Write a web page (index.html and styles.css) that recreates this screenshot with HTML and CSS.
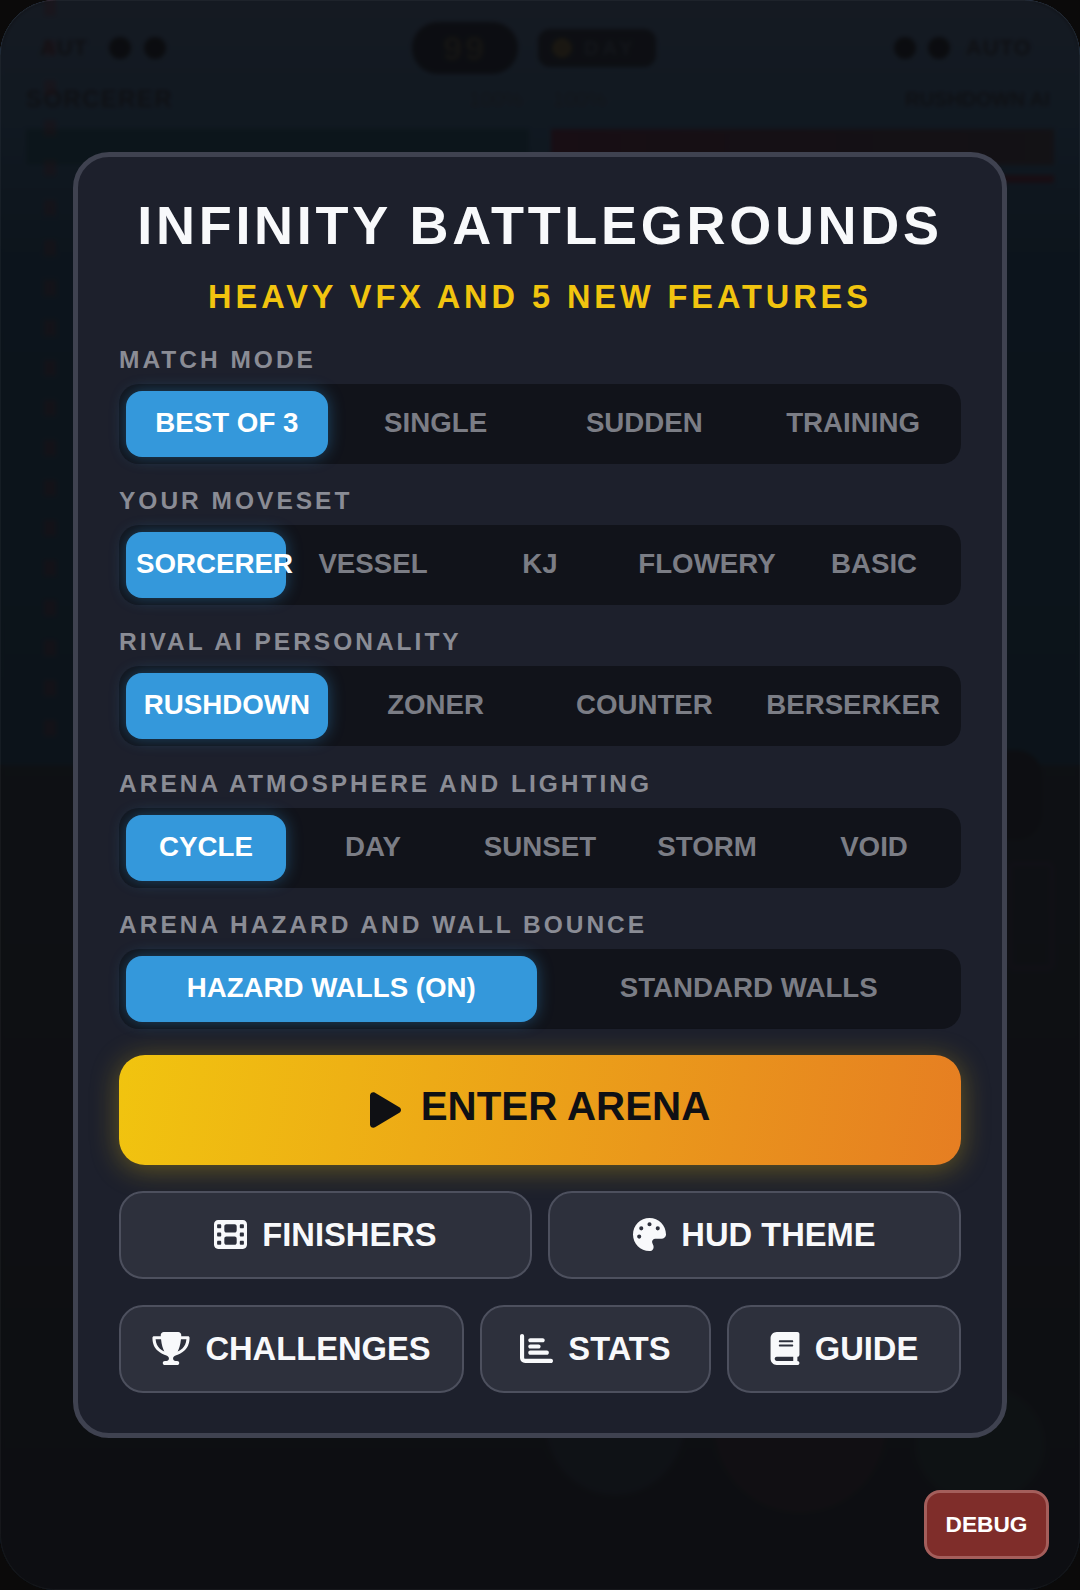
FILE: index.html
```html
<!DOCTYPE html>
<html lang="en">
<head>
    <meta charset="UTF-8">
    <meta name="viewport" content="width=device-width, initial-scale=1.0">
    <title>Infinity Battlegrounds</title>
    <link rel="stylesheet" href="styles.css">
</head>
<body>

<div class="screen">
  <!-- Game behind the menu -->
  <div class="arena">
    <div class="hud">
      <div class="hud__top">
        <div class="hud__side">
          <span class="hud__tag">AUT</span>
          <span class="hud__dot"></span>
          <span class="hud__dot"></span>
        </div>
        <div class="hud__center">
          <span class="hud__timer">99</span>
          <span class="hud__weather"><i class="hud__sun"></i>DAY</span>
        </div>
        <div class="hud__side hud__side--right">
          <span class="hud__dot"></span>
          <span class="hud__dot"></span>
          <span class="hud__tag">AUTO</span>
        </div>
      </div>
      <div class="hud__names">
        <span>SORCERER</span>
        <span class="hud__percents"><span>100%</span><span>100%</span></span>
        <span class="hud__rival">RUSHDOWN AI</span>
      </div>
      <div class="hud__bars">
        <div class="hud__bar hud__bar--you"></div>
        <div class="hud__bar hud__bar--rival"></div>
      </div>
    </div>
    <div class="rope"></div>
    <div class="ground"></div>
    <div class="ghost-blob"></div>
    <div class="ghost-frame"></div>
    <div class="pad pad--a"></div>
    <div class="pad pad--b"></div>
    <div class="pad pad--c"></div>
  </div>

  <!-- Start menu -->
  <div class="backdrop">
    <section class="menu">
      <h1 class="menu__title">INFINITY BATTLEGROUNDS</h1>
      <p class="menu__subtitle">HEAVY VFX AND 5 NEW FEATURES</p>

      <div class="field">
        <div class="field__label">MATCH MODE</div>
        <div class="tabs">
          <div class="tabs__item tabs__item--active">BEST OF 3</div>
          <div class="tabs__item">SINGLE</div>
          <div class="tabs__item">SUDDEN</div>
          <div class="tabs__item">TRAINING</div>
        </div>
      </div>

      <div class="field">
        <div class="field__label">YOUR MOVESET</div>
        <div class="tabs">
          <div class="tabs__item tabs__item--active">SORCERER</div>
          <div class="tabs__item">VESSEL</div>
          <div class="tabs__item">KJ</div>
          <div class="tabs__item">FLOWERY</div>
          <div class="tabs__item">BASIC</div>
        </div>
      </div>

      <div class="field">
        <div class="field__label">RIVAL AI PERSONALITY</div>
        <div class="tabs">
          <div class="tabs__item tabs__item--active">RUSHDOWN</div>
          <div class="tabs__item">ZONER</div>
          <div class="tabs__item">COUNTER</div>
          <div class="tabs__item">BERSERKER</div>
        </div>
      </div>

      <div class="field">
        <div class="field__label">ARENA ATMOSPHERE AND LIGHTING</div>
        <div class="tabs">
          <div class="tabs__item tabs__item--active">CYCLE</div>
          <div class="tabs__item">DAY</div>
          <div class="tabs__item">SUNSET</div>
          <div class="tabs__item">STORM</div>
          <div class="tabs__item">VOID</div>
        </div>
      </div>

      <div class="field">
        <div class="field__label">ARENA HAZARD AND WALL BOUNCE</div>
        <div class="tabs">
          <div class="tabs__item tabs__item--active">HAZARD WALLS (ON)</div>
          <div class="tabs__item">STANDARD WALLS</div>
        </div>
      </div>

      <button class="enter">
        <svg class="enter__icon" viewBox="0 0 448 512"><path d="M424.4 214.7L72.4 6.6C43.8-10.3 0 6.1 0 47.9V464c0 37.5 40.7 60.1 72.4 41.3l352-208c31.4-18.5 31.5-64.1 0-82.6z"/></svg>
        <span class="enter__text">ENTER ARENA</span>
      </button>

      <div class="actions actions--two">
        <button class="action">
          <svg class="action__icon" style="width:33px" viewBox="0 0 512 512"><path d="M0 96C0 60.7 28.7 32 64 32H448c35.3 0 64 28.7 64 64V416c0 35.3-28.7 64-64 64H64c-35.3 0-64-28.7-64-64V96zM48 368v32c0 8.8 7.2 16 16 16H96c8.8 0 16-7.2 16-16V368c0-8.8-7.2-16-16-16H64c-8.8 0-16 7.2-16 16zm368-16c-8.8 0-16 7.2-16 16v32c0 8.8 7.2 16 16 16h32c8.8 0 16-7.2 16-16V368c0-8.8-7.2-16-16-16H416zM48 240v32c0 8.8 7.2 16 16 16H96c8.8 0 16-7.2 16-16V240c0-8.8-7.2-16-16-16H64c-8.8 0-16 7.2-16 16zm368-16c-8.8 0-16 7.2-16 16v32c0 8.8 7.2 16 16 16h32c8.8 0 16-7.2 16-16V240c0-8.8-7.2-16-16-16H416zM48 112v32c0 8.8 7.2 16 16 16H96c8.8 0 16-7.2 16-16V112c0-8.8-7.2-16-16-16H64c-8.8 0-16 7.2-16 16zM416 96c-8.8 0-16 7.2-16 16v32c0 8.8 7.2 16 16 16h32c8.8 0 16-7.2 16-16V112c0-8.8-7.2-16-16-16H416zM160 128v64c0 17.7 14.3 32 32 32H320c17.7 0 32-14.3 32-32V128c0-17.7-14.3-32-32-32H192c-17.7 0-32 14.3-32 32zm32 160c-17.7 0-32 14.3-32 32v64c0 17.7 14.3 32 32 32H320c17.7 0 32-14.3 32-32V320c0-17.7-14.3-32-32-32H192z"/></svg>
          FINISHERS
        </button>
        <button class="action">
          <svg class="action__icon" style="width:33px" viewBox="0 0 512 512"><path d="M512 256c0 .9 0 1.8 0 2.7c-.4 36.5-33.6 61.3-70.1 61.3H344c-26.5 0-48 21.5-48 48c0 3.4 .4 6.7 1 9.9c2.1 10.2 6.5 20 10.8 29.9c6.1 13.8 12.1 27.5 12.1 42c0 31.8-21.6 60.7-53.4 62c-3.5 .1-7 .2-10.6 .2C114.6 512 0 397.4 0 256S114.6 0 256 0S512 114.6 512 256zM128 288a32 32 0 1 0 -64 0 32 32 0 1 0 64 0zm0-96a32 32 0 1 0 0-64 32 32 0 1 0 0 64zM288 96a32 32 0 1 0 -64 0 32 32 0 1 0 64 0zm96 96a32 32 0 1 0 0-64 32 32 0 1 0 0 64z"/></svg>
          HUD THEME
        </button>
      </div>

      <div class="actions actions--three">
        <button class="action">
          <svg class="action__icon" style="width:38px" viewBox="0 0 576 512"><path d="M400 0H176c-26.5 0-48.1 21.8-47.1 48.2c.2 5.3 .4 10.6 .7 15.8H24C10.7 64 0 74.7 0 88c0 92.6 33.5 157 78.5 200.7c44.3 43.1 98.3 64.8 138.1 75.8c23.4 6.5 39.4 26 39.4 45.6c0 20.9-17 37.9-37.9 37.9H192c-17.7 0-32 14.3-32 32s14.3 32 32 32H384c17.7 0 32-14.3 32-32s-14.3-32-32-32H357.9C337 448 320 431 320 410.1c0-19.6 15.9-39.2 39.4-45.6c39.9-11 93.9-32.7 138.2-75.8C542.5 245 576 180.6 576 88c0-13.3-10.7-24-24-24H446.4c.3-5.2 .5-10.4 .7-15.8C448.1 21.8 426.5 0 400 0zM48.9 112h84.4c9.1 90.1 29.2 150.3 51.9 190.6c-24.9-11-50.8-26.5-73.2-48.3c-32-31.1-58-76-63-142.3zM464.1 254.3c-22.4 21.8-48.3 37.3-73.2 48.3c22.7-40.3 42.8-100.5 51.9-190.6h84.4c-5.1 66.3-31.1 111.2-63 142.3z"/></svg>
          CHALLENGES
        </button>
        <button class="action">
          <svg class="action__icon" style="width:33px" viewBox="0 0 512 512"><path d="M32 32c17.7 0 32 14.3 32 32V400c0 8.8 7.2 16 16 16H480c17.7 0 32 14.3 32 32s-14.3 32-32 32H80c-44.2 0-80-35.8-80-80V64C0 46.3 14.3 32 32 32zm96 96c0-17.7 14.3-32 32-32l192 0c17.7 0 32 14.3 32 32s-14.3 32-32 32l-192 0c-17.7 0-32-14.3-32-32zm32 64H288c17.7 0 32 14.3 32 32s-14.3 32-32 32H160c-17.7 0-32-14.3-32-32s14.3-32 32-32zm0 96H416c17.7 0 32 14.3 32 32s-14.3 32-32 32H160c-17.7 0-32-14.3-32-32s14.3-32 32-32z"/></svg>
          STATS
        </button>
        <button class="action">
          <svg class="action__icon" style="width:30px" viewBox="0 0 448 512"><path d="M96 0C43 0 0 43 0 96V416c0 53 43 96 96 96H384h32c17.7 0 32-14.3 32-32s-14.3-32-32-32V384c17.7 0 32-14.3 32-32V32c0-17.7-14.3-32-32-32H384 96zm0 384H352v64H96c-17.7 0-32-14.3-32-32s14.3-32 32-32zm32-240c0-8.8 7.2-16 16-16H336c8.8 0 16 7.2 16 16s-7.2 16-16 16H144c-8.8 0-16-7.2-16-16zm16 48H336c8.8 0 16 7.2 16 16s-7.2 16-16 16H144c-8.8 0-16-7.2-16-16s7.2-16 16-16z"/></svg>
          GUIDE
        </button>
      </div>
    </section>
  </div>

  <button class="debug">DEBUG</button>
</div>

</body>
</html>
```

FILE: styles.css
```css
/* General styles */
* {
    box-sizing: border-box;
}
body {
    font-family: 'Liberation Sans', Arial, sans-serif;
    background: #0b0a0a;
    margin: 0;
}
button {
    font-family: inherit;
    cursor: pointer;
}

.screen {
    position: relative;
    width: 1080px;
    height: 1590px;
    overflow: hidden;
}

/* Game behind the menu */
.arena {
    position: absolute;
    inset: 0;
    overflow: hidden;
    border-radius: 56px;
    background: linear-gradient(180deg, #4a6588 0%, #2a5a80 8%, #0d3e5c 16%, #0a3650 48%);
    color: #1d2026;
}
.hud {
    padding: 22px 26px 0;
}
.hud__top {
    display: grid;
    grid-template-columns: 1fr auto 1fr;
    align-items: center;
    height: 52px;
}
.hud__side {
    display: flex;
    align-items: center;
    gap: 13px;
    padding-left: 14px;
    font-size: 22px;
}
.hud__side--right {
    justify-content: flex-end;
    gap: 12px;
    padding: 0 8px 0 0;
}
.hud__tag {
    width: 56px;
    font-weight: bold;
    letter-spacing: 1px;
}
.hud__side--right .hud__tag {
    width: 80px;
    margin-left: 4px;
}
.hud__dot {
    width: 22px;
    height: 22px;
    border-radius: 50%;
    background: #050608;
}
.hud__center {
    display: flex;
    align-items: center;
    gap: 20px;
    margin-left: -12px;
}
.hud__timer {
    width: 106px;
    height: 52px;
    border-radius: 26px;
    background: #0a0d16;
    color: #4a4020;
    font-size: 34px;
    font-weight: bold;
    line-height: 52px;
    text-align: center;
    letter-spacing: 3px;
}
.hud__weather {
    display: flex;
    align-items: center;
    gap: 12px;
    width: 118px;
    height: 38px;
    padding-left: 14px;
    border-radius: 12px;
    background: #0f141d;
    color: #3a4450;
    font-size: 20px;
    font-weight: bold;
    letter-spacing: 4px;
}
.hud__sun {
    width: 20px;
    height: 20px;
    border-radius: 50%;
    background: #6c5216;
}
.hud__names {
    display: grid;
    grid-template-columns: 1fr auto 1fr;
    align-items: center;
    height: 32px;
    margin-top: 9px;
    color: #1f232a;
    font-size: 24px;
    font-weight: bold;
    letter-spacing: 1.4px;
}
.hud__percents {
    display: flex;
    gap: 30px;
    padding-right: 4px;
    color: #3e4852;
    font-size: 21px;
    font-weight: normal;
    letter-spacing: 0;
}
.hud__rival {
    justify-self: end;
    padding-right: 4px;
    font-size: 20px;
    letter-spacing: 0;
}
.hud__bars {
    display: flex;
    gap: 22px;
    height: 36px;
    margin-top: 14px;
}
.hud__bar {
    flex: 1;
    position: relative;
}
.hud__bar--you {
    background: #0b4455;
}
.hud__bar--rival {
    background: linear-gradient(90deg, #5c1028 0%, #4a1d2a 40%, #3a2b30 100%);
}
.hud__bar--rival::after {
    content: '';
    position: absolute;
    left: 0;
    right: 0;
    top: 46px;
    height: 8px;
    background: #5c1022;
}
.rope {
    position: absolute;
    left: 44px;
    top: 0;
    width: 12px;
    height: 750px;
    background: repeating-linear-gradient(180deg, #96181e 0 16px, transparent 16px 40px);
    opacity: 0.35;
}
.ground {
    position: absolute;
    left: 0;
    right: 0;
    top: 765px;
    bottom: 0;
    background: linear-gradient(180deg, #1b2327 0%, #16181d 50%, #121317 100%);
}
.ghost-blob {
    position: absolute;
    left: 960px;
    top: 750px;
    width: 82px;
    height: 90px;
    border-radius: 26px;
    background: #0f1115;
}
.ghost-frame {
    position: absolute;
    left: 1008px;
    top: 862px;
    width: 46px;
    height: 108px;
    border: 4px solid #2c2038;
    border-radius: 6px;
}
.pad {
    position: absolute;
    border-radius: 50%;
}
.pad--a {
    left: 545px;
    top: 1345px;
    width: 140px;
    height: 150px;
    background: #1f2a35;
}
.pad--b {
    left: 715px;
    top: 1340px;
    width: 170px;
    height: 172px;
    background: #301b1e;
}
.pad--c {
    left: 915px;
    top: 1385px;
    width: 130px;
    height: 118px;
    background: #182a24;
}

/* Start menu */
.backdrop {
    position: absolute;
    inset: 0;
    display: flex;
    align-items: center;
    justify-content: center;
    border-radius: 56px;
    background: rgba(13, 14, 18, 0.86);
    box-shadow: inset 0 0 0 1px rgba(255, 255, 255, 0.04);
    backdrop-filter: blur(2px);
}
.menu {
    width: 934px;
    height: 1286px;
    padding: 37px 41px 0;
    border: 5px solid #3f4250;
    border-radius: 36px;
    background: #1d202c;
    color: #f8f9fb;
}
.menu__title {
    margin: 0;
    font-size: 54px;
    line-height: 62px;
    letter-spacing: 3.7px;
    text-align: center;
}
.menu__subtitle {
    margin: 22px 0 29.7px;
    color: #f1c40f;
    font-size: 32.5px;
    font-weight: bold;
    line-height: 38px;
    letter-spacing: 3.95px;
    text-align: center;
}

.field {
    margin-bottom: 23.3px;
}
.field__label {
    margin-bottom: 10px;
    color: #8a8c95;
    font-size: 24.5px;
    font-weight: bold;
    line-height: 28px;
    letter-spacing: 3px;
}
.tabs {
    display: flex;
    gap: 7px;
    height: 80px;
    padding: 7px;
    border-radius: 20px;
    background: #11131a;
}
.tabs__item {
    flex: 1 1 0;
    min-width: 0;
    padding: 0 10px;
    border-radius: 16px;
    color: #7b7d85;
    font-size: 27.7px;
    font-weight: bold;
    line-height: 64px;
    text-align: center;
    white-space: nowrap;
}
.tabs__item--active {
    background: #3498db;
    color: #fff;
    box-shadow: 0 0 16px rgba(52, 152, 219, 0.4);
}

.enter {
    display: flex;
    align-items: center;
    justify-content: center;
    gap: 20px;
    width: 100%;
    height: 110px;
    margin-top: 26px;
    border: none;
    border-radius: 26px;
    background: linear-gradient(100deg, #f1c40f, #e67e22);
    box-shadow: 0 4px 28px rgba(241, 196, 15, 0.34);
    color: #0f1014;
    font-size: 40.3px;
    font-weight: bold;
}
.enter__icon {
    width: 31px;
    height: 36px;
    fill: currentColor;
}
.enter__text {
    padding-bottom: 6px;
}

.actions {
    display: grid;
    gap: 16px;
    margin-top: 26px;
}
.actions--two {
    grid-template-columns: 1fr 1fr;
}
.actions--three {
    grid-template-columns: 345fr 231fr 234fr;
}
.action {
    display: flex;
    align-items: center;
    justify-content: center;
    gap: 15px;
    height: 88px;
    padding: 0;
    border: 2.5px solid #4d505e;
    border-radius: 24px;
    background: #2d303c;
    color: #f8f9fb;
    font-size: 32.7px;
    font-weight: bold;
}
.action__icon {
    height: 33px;
    fill: currentColor;
}

.debug {
    position: absolute;
    right: 31px;
    bottom: 31px;
    width: 125px;
    height: 69px;
    border: 3px solid #a45e5b;
    border-radius: 16px;
    background: #7f2d2a;
    color: #fff;
    font-size: 22.7px;
    font-weight: bold;
}
```
